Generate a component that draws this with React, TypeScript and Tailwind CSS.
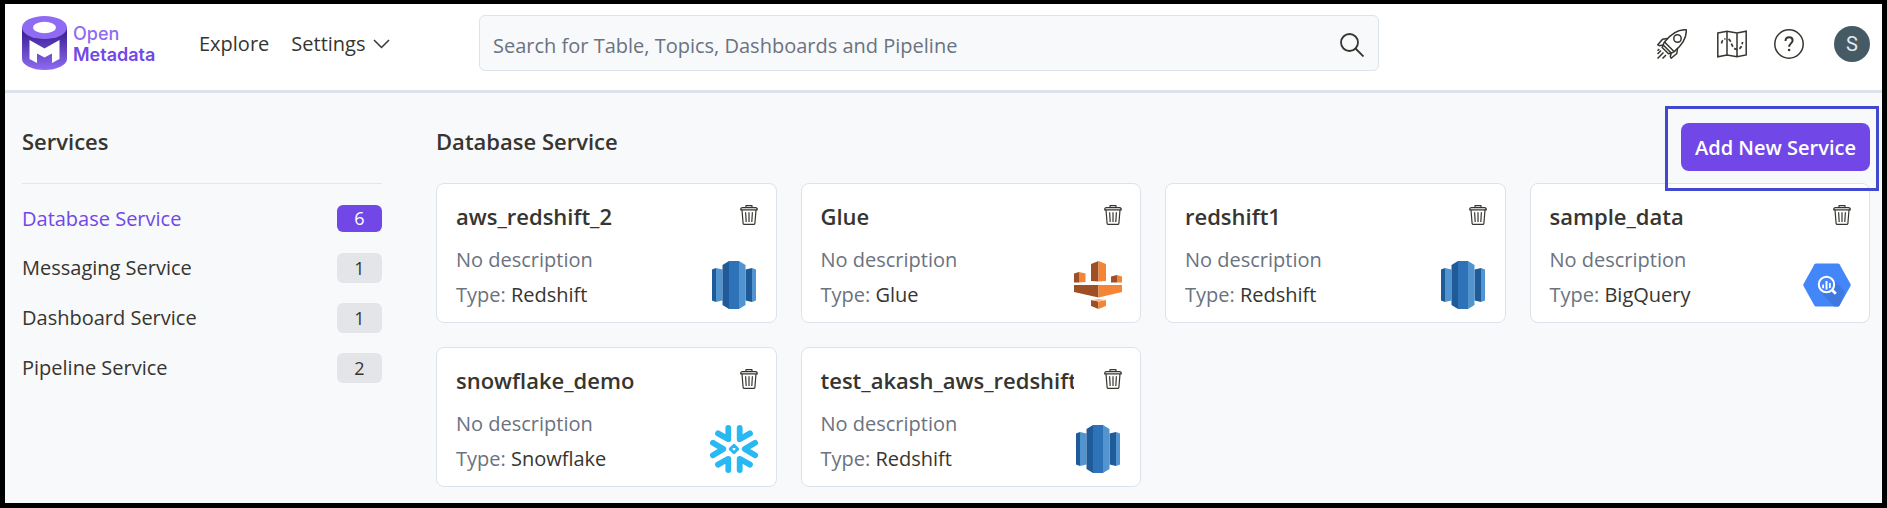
import React from "react";

type ServiceKind = "Redshift" | "Glue" | "BigQuery" | "Snowflake";

interface Service {
  name: string;
  type: ServiceKind;
}

interface Category {
  label: string;
  count: number;
}

const categories: Category[] = [
  { label: "Database Service", count: 6 },
  { label: "Messaging Service", count: 1 },
  { label: "Dashboard Service", count: 1 },
  { label: "Pipeline Service", count: 2 },
];

const services: Service[] = [
  { name: "aws_redshift_2", type: "Redshift" },
  { name: "Glue", type: "Glue" },
  { name: "redshift1", type: "Redshift" },
  { name: "sample_data", type: "BigQuery" },
  { name: "snowflake_demo", type: "Snowflake" },
  { name: "test_akash_aws_redshift", type: "Redshift" },
];

function LogoMark() {
  return (
    <svg viewBox="0 0 45 54" className="h-[54px] w-[45px]" aria-hidden="true">
      <defs>
        <linearGradient id="logo-body" x1="0" y1="0" x2="0" y2="1">
          <stop offset="0.1" stopColor="#3a1f94" />
          <stop offset="1" stopColor="#8f6bf3" />
        </linearGradient>
      </defs>
      <path d="M0 11v32c0 6 10 11 22.500 11S45 49 45 43V11z" fill="url(#logo-body)" />
      <ellipse cx="22.500" cy="11.500" rx="22.500" ry="11.500" fill="#8f6bf3" />
      <ellipse cx="22.500" cy="11.500" rx="11.500" ry="5.800" fill="#fff" />
      <path d="M7.500 24 22.500 32.500 37.500 24V43L30 47V37.500L22.500 41.500 15 37.500V47L7.500 43z" fill="#fff" />
    </svg>
  );
}

function ChevronIcon() {
  return (
    <svg viewBox="0 0 17 10" className="h-[10px] w-[17px]" fill="none" stroke="#37352f" strokeWidth="1.500" aria-hidden="true">
      <path d="M1 1l7.500 7.500L16 1" />
    </svg>
  );
}

function SearchIcon() {
  return (
    <svg viewBox="0 0 24 24" className="size-6" fill="none" stroke="#37352f" strokeWidth="1.800" aria-hidden="true">
      <circle cx="9.500" cy="9.500" r="8.500" />
      <path d="M15.500 15.500l8 8" />
    </svg>
  );
}

function RocketIcon() {
  return (
    <svg viewBox="0 0 30 30" className="size-[30px]" fill="none" stroke="#37352f" strokeWidth="1.500" strokeLinejoin="round" aria-hidden="true">
      <path d="M29.200.800C22 .200 15 3.500 7.500 13c-.800 1-1 1.600-1.300 3l8 8c1.400-.400 2-.600 3-1.400C26.500 15 29.800 8 29.200.800z" />
      <circle cx="20.500" cy="9.500" r="3.700" />
      <path d="M10.500 9.500 5.500 10.200.800 15.800l1.500.900 4-.700" />
      <path d="M20.500 19.500l-.700 5-5.600 4.700-.900-1.500.900-3.700" />
      <path d="M6.200 16l-1 2.500 6.300 6.300 2.700-.800M7.500 13l9.500 9.500" />
      <path d="M4 21.500.500 25M6.500 23.500.500 29.500M9 26l-3.500 3.500M.500 21.800l1.800-1.800" />
    </svg>
  );
}

function MapIcon() {
  return (
    <svg viewBox="0 0 30 28" className="h-7 w-[30px]" fill="none" stroke="#37352f" strokeWidth="1.500" aria-hidden="true">
      <path d="M.800 3 10 1.200 20 3 29.200 1.200V25L20 26.800 10 25 .800 26.800zM10 1.200V25M20 3v23.800" />
      <path d="M4.500 13.500C5 10.500 6 9.500 8.500 8.800M11.500 9c2.500 1.500 2.500 4.500 4 7 .800 1.500 2 3 4.500 3.500 3 0 5-2.500 5.500-7.500" strokeWidth="1.700" strokeDasharray="3.500 2" />
    </svg>
  );
}

function HelpIcon() {
  return (
    <svg viewBox="0 0 30 30" className="size-[30px]" fill="none" stroke="#37352f" aria-hidden="true">
      <circle cx="15" cy="15" r="14.200" strokeWidth="1.500" />
      <path d="M11.500 12c0-2.300 1.500-3.700 3.600-3.700s3.500 1.400 3.500 3.200c0 2.800-3.500 3-3.500 6.300" strokeWidth="2" />
      <circle cx="15.100" cy="21" r="1.300" fill="#37352f" stroke="none" />
    </svg>
  );
}

function TrashIcon() {
  return (
    <svg viewBox="0 0 18 20" className="h-5 w-[18px]" fill="none" stroke="#37352f" strokeWidth="1.200" strokeLinejoin="round" aria-hidden="true">
      <path d="M6 2.500V.700h6v1.800M.700 4.800c0-1.400.600-2.200 1.800-2.200h13c1.200 0 1.800.800 1.800 2.200zM2 5l1.100 13.300c.100.700.500 1.100 1.200 1.100h9.400c.700 0 1.100-.400 1.200-1.100L16 5M5.600 7.200l.600 9.800M9 7.200V17M12.400 7.200l-.600 9.800" />
    </svg>
  );
}

function RedshiftIcon() {
  return (
    <svg viewBox="0 0 48 48" className="size-12" aria-hidden="true">
      <path d="M2 8.500 6 7v34l-4-1.500z" fill="#205b99" />
      <path d="M6 7l6.500 1.500v31L6 41z" fill="#5294cf" />
      <path d="M42 7l-6.500 1.500v31L42 41z" fill="#205b99" />
      <path d="M42 7l4 1.500v31L42 41z" fill="#5294cf" />
      <path d="M12.500 4 19 0v48l-6.500-4z" fill="#205b99" />
      <path d="M19 0h10v48H19z" fill="#2e73b8" />
      <path d="M29 0l6.500 4v40L29 48z" fill="#5294cf" />
    </svg>
  );
}

function GlueIcon() {
  return (
    <svg viewBox="0 0 48 48" className="size-12" aria-hidden="true">
      <path d="M17 3l7.500-3v20.500L17 20zM0 12.500 5 11v10.500H0zM37 15.500l6-1.500v7.500h-6zM0 24h24.500v12.500L0 31zM17 39l7.500 1.500V48L17 45z" fill="#9d5025" />
      <path d="M24.500 0 32 3v17l-7.500.500zM5 11l6.500 1.500V21L5 21.500zM43 14l5 1.500v6h-5zM24.500 24H48v7l-23.500 5.500zM32 39l-7.500 1.500V48l7.500-3z" fill="#f58536" />
      <path d="M17 39l7.500-1 7.500 1-7.500 1.500z" fill="#f8b98b" />
    </svg>
  );
}

function BigQueryIcon() {
  return (
    <svg viewBox="0 0 48 48" className="size-12" aria-hidden="true">
      <path d="M13 2.500h22q1 0 1.500.800L47.500 23q.500 1 0 2L36.500 44.700q-.500.800-1.500.800H13q-1 0-1.500-.800L.500 25q-.500-1 0-2L11.500 3.300q.500-.800 1.500-.800z" fill="#4386fa" />
      <path d="M29.500 17.500 42 30.500l-5.500 14q-.500 1-1.500 1h-4L18 31z" fill="#3f79e0" />
      <circle cx="23.500" cy="23.500" r="7.700" fill="#4386fa" stroke="#fff" strokeWidth="2" />
      <path d="M19.200 23.500h1.800v3.700h-1.800zM22.500 20h2v8.500h-2zM26 22h1.800v5H26z" fill="#fff" />
      <path d="M28.800 28.800l4 4" stroke="#fff" strokeWidth="2.800" />
    </svg>
  );
}

function SnowflakeIcon() {
  return (
    <svg viewBox="0 0 48 48" className="size-12" fill="none" stroke="#29b9f2" strokeWidth="5.800" strokeLinecap="round" strokeLinejoin="round" aria-hidden="true">
      <path d="M18.300 2.900v11.300L8 8.400M29.700 2.900v11.300L40 8.400" />
      <path d="M18.300 45.100V33.800L8 39.600M29.700 45.100V33.800L40 39.600" />
      <path d="M2.900 17.700 13.300 24 2.900 30.300M45.100 17.700 34.700 24l10.400 6.300" />
      <path d="M24 20.200l3.800 3.800-3.800 3.800-3.800-3.800z" strokeWidth="2.800" />
    </svg>
  );
}

const serviceIcons: Record<ServiceKind, () => React.JSX.Element> = {
  Redshift: RedshiftIcon,
  Glue: GlueIcon,
  BigQuery: BigQueryIcon,
  Snowflake: SnowflakeIcon,
};

function Header() {
  return (
    <header className="flex h-[89px] items-start border-b-3 border-[#dce3ec] bg-white pr-3 pl-[17px]">
      <a href="#home" className="mt-3 flex w-[177px] items-center gap-1.5" aria-label="Open Metadata">
        <LogoMark />
        <span className="pt-0.5 font-['Inter'] text-lg leading-[21px] font-semibold text-[#7147e8]">
          <span className="block font-medium text-[#8f6bf3]">Open</span>
          <span className="block">Metadata</span>
        </span>
      </a>
      <nav className="mt-[22px] flex w-[280px] items-center gap-[22px]">
        <a href="#explore">Explore</a>
        <button type="button" className="flex items-center gap-2">
          Settings
          <ChevronIcon />
        </button>
      </nav>
      <form className="mt-[11px] flex h-14 w-[900px] items-center rounded-md border border-[#dce3ec] bg-[#f8f9fb] pr-3.5 pl-[13px]">
        <input
          type="search"
          aria-label="Search"
          placeholder="Search for Table, Topics, Dashboards and Pipeline"
          className="h-full min-w-0 flex-1 pt-1 outline-none placeholder:text-[#6b7280]"
        />
        <button type="button" aria-label="Run search" className="pt-1">
          <SearchIcon />
        </button>
      </form>
      <div className="mt-[22px] ml-auto flex h-9 items-center">
        <button type="button" aria-label="What's new" className="mr-[30px]">
          <RocketIcon />
        </button>
        <button type="button" aria-label="Tour" className="mr-[27px]">
          <MapIcon />
        </button>
        <button type="button" aria-label="Help" className="mr-[30px]">
          <HelpIcon />
        </button>
        <button type="button" aria-label="Profile" className="size-9 rounded-full bg-[#455a64] font-['Roboto'] text-xl text-[#e4e8ea]">
          S
        </button>
      </div>
    </header>
  );
}

function Sidebar() {
  return (
    <aside className="w-[360px] shrink-0">
      <h2 className="mb-5 border-b border-[#e3e6eb] pb-7 text-[22px] leading-7 font-semibold">Services</h2>
      <ul className="flex flex-col gap-5">
        {categories.map((category, index) => (
          <li key={category.label}>
            <a href="#services" className={index === 0 ? "flex h-[29px] items-center justify-between text-[#7147e8]" : "flex h-[30px] items-center justify-between"}>
              {category.label}
              <span
                className={
                  index === 0
                    ? "w-[45px] rounded-md bg-[#7147e8] text-center text-lg leading-[27px] text-white"
                    : "w-[45px] rounded-md bg-[#e3e5e8] text-center text-lg leading-[30px]"
                }
              >
                {category.count}
              </span>
            </a>
          </li>
        ))}
      </ul>
    </aside>
  );
}

function ServiceCard({ name, type }: Service) {
  const Icon = serviceIcons[type];
  return (
    <li className="flex h-[140px] justify-between rounded-lg border border-[#dce3ec] bg-white pt-[17px] pr-[18px] pb-[13px] pl-[19px]">
      <div className="min-w-0 flex-1">
        <h3 className="mb-[11px] overflow-hidden text-[22px] leading-[30px] font-semibold whitespace-nowrap">{name}</h3>
        <p className="leading-[35px] text-[#6b7280]">No description</p>
        <p className="leading-[35px] text-[#6b7280]">
          Type: <span className="text-[#37352f]">{type}</span>
        </p>
      </div>
      <div className="flex flex-col items-end justify-between">
        <button type="button" aria-label={`Delete ${name}`} className="mt-1">
          <TrashIcon />
        </button>
        <Icon />
      </div>
    </li>
  );
}

export default function App() {
  return (
    <div className="min-h-screen border-x-5 border-t-4 border-b-5 border-black bg-[#f8f9fb] font-['Open_Sans','Noto_Sans',sans-serif] text-xl leading-9 text-[#37352f]">
      <Header />
      <main className="flex gap-[54px] pt-[34px] pr-3 pb-4 pl-[17px]">
        <Sidebar />
        <section className="relative min-w-0 flex-1">
          <h2 className="mb-7 text-[22px] leading-7 font-semibold">Database Service</h2>
          <ul className="grid grid-cols-4 gap-6">
            {services.map((service) => (
              <ServiceCard key={service.name} {...service} />
            ))}
          </ul>
          <div className="absolute -top-[21px] -right-[9px] border-3 border-[#4049cf] pt-[14px] pr-[6px] pb-[17px] pl-[13px]">
            <button type="button" className="block h-12 w-[189px] rounded-lg bg-[#7147e8] pt-0.5 font-semibold whitespace-nowrap text-white">
              Add New Service
            </button>
          </div>
        </section>
      </main>
    </div>
  );
}
